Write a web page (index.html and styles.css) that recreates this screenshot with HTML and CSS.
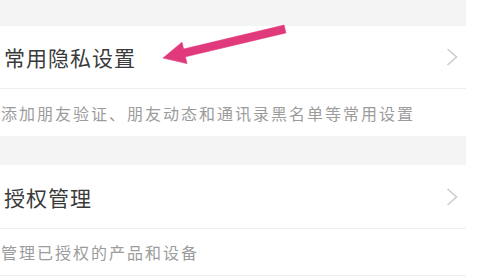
FILE: index.html
```
<!DOCTYPE html>
<html lang="zh-CN">
<head>
    <meta charset="UTF-8">
    <meta name="viewport" content="width=device-width, initial-scale=1.0">
    <title>隐私设置</title>
    <link rel="stylesheet" href="styles.css">
</head>
<body>
    <div class="page">
        <div class="gap top"></div>

        <div class="row">
            <span class="title">常用隐私设置</span>
            <svg class="chevron" width="12" height="18" viewBox="0 0 12 18">
                <polyline points="1.5,1 10.5,9 1.5,17" />
            </svg>
        </div>
        <div class="desc">添加朋友验证、朋友动态和通讯录黑名单等常用设置</div>

        <div class="gap mid"></div>

        <div class="row">
            <span class="title">授权管理</span>
            <svg class="chevron" width="12" height="18" viewBox="0 0 12 18">
                <polyline points="1.5,1 10.5,9 1.5,17" />
            </svg>
        </div>
        <div class="desc last">管理已授权的产品和设备</div>

        <svg class="arrow" width="484" height="276" viewBox="0 0 484 276">
            <polygon points="163,58 182,42.2 183.6,49 284.1,25.1 285.9,32.9 185.4,56.8 187,63.6" />
        </svg>
    </div>
</body>
</html>
```

FILE: styles.css
```
body {
    margin: 0;
    background-color: #fff;
    font-family: "Noto Sans CJK SC", "Noto Sans", sans-serif;
}

.page {
    position: relative;
    width: 466px;
    height: 276px;
    overflow: hidden;
}

.gap {
    background-color: #f4f4f4;
}

.gap.top {
    height: 26px;
}

.gap.mid {
    height: 29px;
}

.row {
    height: 62px;
    display: flex;
    align-items: center;
    justify-content: space-between;
    padding: 0 8px 0 4px;
    border-bottom: 1px solid #efefef;
}

.row + .desc + .gap + .row {
    height: 63px;
}

.title {
    font-size: 21px;
    letter-spacing: 1px;
    color: #3a3a3a;
}

.chevron polyline {
    fill: none;
    stroke: #cdcdcd;
    stroke-width: 1.6;
}

.desc {
    height: 47px;
    display: flex;
    align-items: center;
    padding-left: 1px;
    font-size: 16px;
    letter-spacing: 2px;
    color: #9c9c9c;
}

.desc.last {
    height: 46px;
    border-bottom: 1px solid #efefef;
}

.arrow {
    position: absolute;
    left: 0;
    top: 0;
    pointer-events: none;
}

.arrow polygon {
    fill: #e0397c;
    stroke: #e0397c;
    stroke-width: 0.6;
    stroke-linejoin: round;
}
```
